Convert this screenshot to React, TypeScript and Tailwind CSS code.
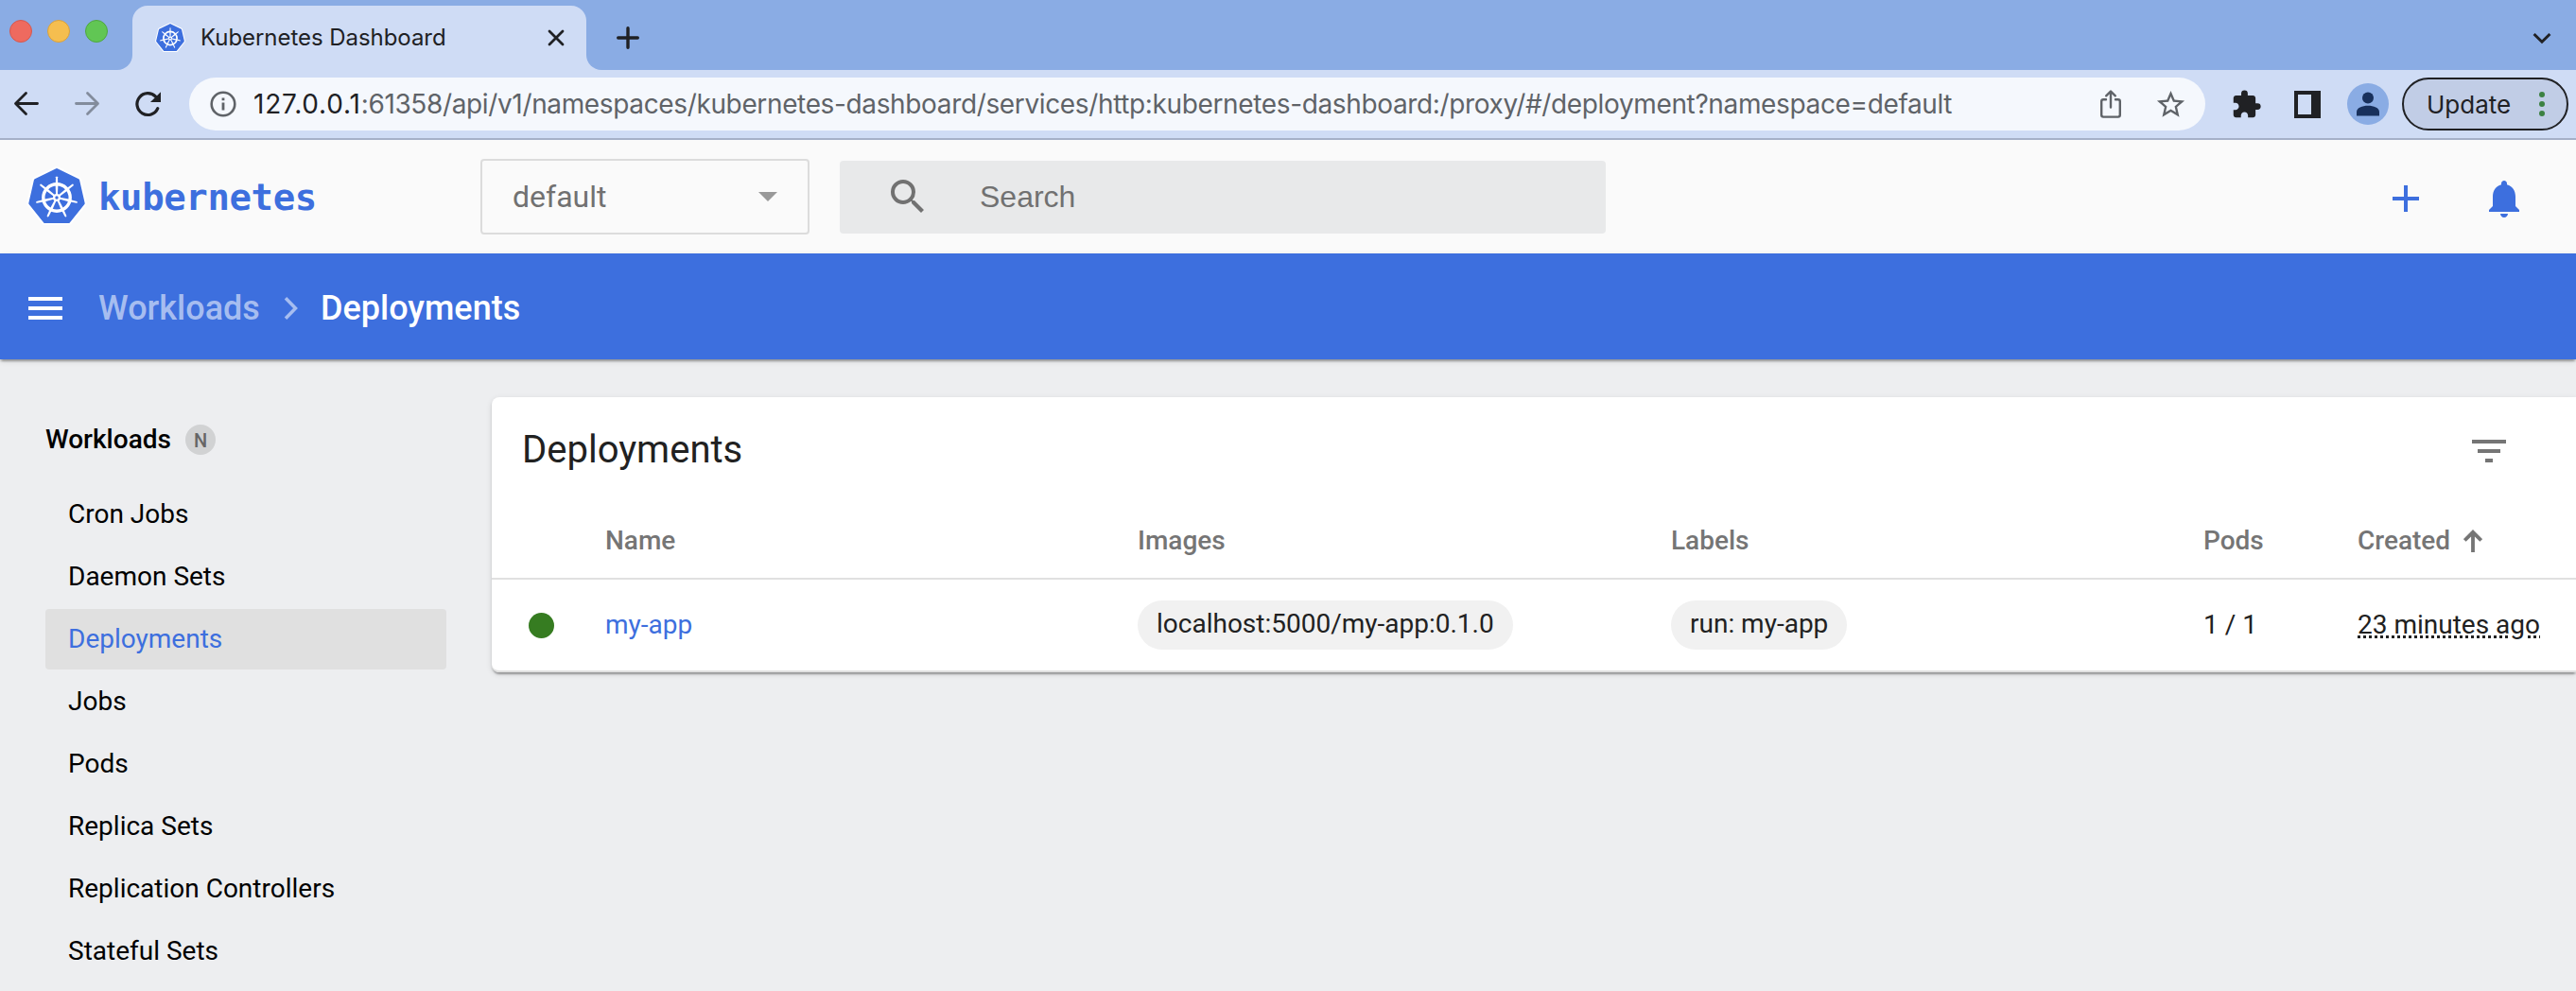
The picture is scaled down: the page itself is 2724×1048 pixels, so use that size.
import React from "react";

const cardShadow =
  "shadow-[0_4px_2px_-2px_rgba(0,0,0,0.2),0_2px_2px_0_rgba(0,0,0,0.14),0_2px_6px_0_rgba(0,0,0,0.12)]";

function Glyph({ d, className }: { d: string; className: string }) {
  return (
    <svg viewBox="0 0 24 24" fill="currentColor" className={"block shrink-0 " + className}>
      <path d={d} />
    </svg>
  );
}

const SPOKES = [0, 1, 2, 3, 4, 5, 6];

function KubeLogo({ className }: { className: string }) {
  const hept = "M32 3.6 L54.6 14.6 L60.2 39 L44.6 58.6 L19.4 58.6 L3.8 39 L9.4 14.6 Z";
  return (
    <svg viewBox="0 0 64 64" className={"block shrink-0 " + className}>
      <path d={hept} fill="#fff" stroke="#fff" strokeWidth="7" strokeLinejoin="round" />
      <path d={hept} fill="#3d6fde" stroke="#3d6fde" strokeWidth="3" strokeLinejoin="round" />
      <circle cx="32" cy="33" r="14.2" fill="none" stroke="#fff" strokeWidth="3.4" />
      {SPOKES.map((i) => (
        <g key={i} transform={`rotate(${(i * 360) / 7} 32 33)`}>
          <path d="M31 11.2 Q32 9.6 33 11.2 L33.2 18 L30.8 18 Z" fill="#fff" />
          <path d="M30.6 19 L33.4 19 L32.9 31 L31.1 31 Z" fill="#fff" />
        </g>
      ))}
      <circle cx="32" cy="33" r="4" fill="#fff" />
      <circle cx="32" cy="33" r="1.7" fill="#3d6fde" />
    </svg>
  );
}

function TabStrip() {
  return (
    <div className="flex h-[74px] bg-[#cfdcf5]">
      <div className="flex w-[140px] gap-4 rounded-br-[16px] bg-[#8aace4] pl-[10px] pt-[21px]">
        <span className="size-6 rounded-full border border-[#d5584f] bg-[#ee6a5f]" />
        <span className="size-6 rounded-full border border-[#d9a13b] bg-[#f5be4f]" />
        <span className="size-6 rounded-full border border-[#4fa73f] bg-[#61c654]" />
      </div>
      <div className="w-[480px] bg-[#8aace4] pt-[6px]">
        <div className="flex h-[68px] items-center rounded-t-[16px] bg-[#cfdcf5] pl-6 pr-[22px]">
          <KubeLogo className="size-8" />
          <span className="ml-4 whitespace-nowrap text-[24px] leading-[30px] tracking-[-0.05px] text-[#202124]">
            Kubernetes Dashboard
          </span>
          <svg viewBox="0 0 20 20" className="ml-auto size-5 shrink-0" stroke="#202124" strokeWidth="2.8" strokeLinecap="round">
            <path d="M3 3L17 17M17 3L3 17" />
          </svg>
        </div>
      </div>
      <div className="flex flex-1 items-center justify-between rounded-bl-[16px] bg-[#8aace4] pl-8 pr-[26px] pt-[6px]">
        <svg viewBox="0 0 24 24" className="size-6" stroke="#202124" strokeWidth="3.4" strokeLinecap="round">
          <path d="M12 1.7V22.3M1.7 12H22.3" />
        </svg>
        <svg viewBox="0 0 20 20" className="size-5" stroke="#202124" strokeWidth="3" fill="none">
          <path d="M1.6 6L10 14.2L18.4 6" />
        </svg>
      </div>
    </div>
  );
}

function Toolbar() {
  return (
    <div className="flex h-[74px] items-center border-b-2 border-[#a5b0c8] bg-[#cfdcf5] pl-3">
      <svg viewBox="0 0 32 32" className="size-8" fill="none" stroke="#202124" strokeWidth="2.8" strokeLinecap="round" strokeLinejoin="round">
        <path d="M27.5 15.5H5M15.5 4.5L4.5 15.5L15.5 26.5" />
      </svg>
      <svg viewBox="0 0 32 32" className="ml-8 size-8" fill="none" stroke="#838c9c" strokeWidth="2.8" strokeLinecap="round" strokeLinejoin="round">
        <path d="M4.5 15.5H27M16.5 4.5L27.5 15.5L16.5 26.5" />
      </svg>
      <svg viewBox="0 0 32 32" className="ml-8 size-8" fill="none">
        <path d="M26.8 20.6A11.4 11.4 0 1 1 24.6 8.2" stroke="#202124" strokeWidth="3.2" strokeLinecap="round" />
        <path d="M30 3.2V14H19Z" fill="#202124" />
      </svg>
      <div className="ml-7 flex h-14 w-[2132px] items-center rounded-full bg-[#f5f8fd] pl-[22px] pr-[19px] text-[#5f6368]">
        <svg viewBox="0 0 28 28" className="size-7 shrink-0" fill="none">
          <circle cx="14" cy="14" r="12.3" stroke="#5f6368" strokeWidth="2.6" />
          <path d="M14 12.5V20.5M14 7.5V10.3" stroke="#5f6368" strokeWidth="2.8" />
        </svg>
        <span className="ml-[18px] whitespace-nowrap text-[28px] leading-[34px] tracking-[-0.36px]">
          <span className="tracking-[0.8px] text-[#202124]">127.0.0.1</span>
          :61358/api/v1/namespaces/kubernetes-dashboard/services/http:kubernetes-dashboard:/proxy/#/deployment?namespace=default
        </span>
        <svg viewBox="0 0 24 32" className="ml-auto h-8 w-6 shrink-0" fill="none" stroke="#5f6368" strokeWidth="2.4" strokeLinecap="round" strokeLinejoin="round">
          <path d="M7 11.2H4.2Q2.2 11.2 2.2 13.2V27.6Q2.2 29.6 4.2 29.6H19.8Q21.8 29.6 21.8 27.6V13.2Q21.8 11.2 19.8 11.2H17" />
          <path d="M12 19.5V3M7.2 7.3L12 2.5L16.8 7.3" />
        </svg>
        <Glyph
          className="ml-[34px] size-[35px]"
          d="M22 9.24l-7.19-.62L12 2 9.19 8.63 2 9.24l5.46 4.73L5.82 21 12 17.27 18.18 21l-1.63-7.03L22 9.24zM12 15.4l-3.76 2.27 1-4.28-3.32-2.88 4.38-.38L12 6.1l1.71 4.04 4.38.38-3.32 2.88 1 4.28L12 15.4z"
        />
      </div>
      <Glyph
        className="ml-[27px] size-[33px] text-[#202124]"
        d="M20.5 11H19V7c0-1.1-.9-2-2-2h-4V3.5a2.5 2.5 0 0 0-5 0V5H4c-1.1 0-1.99.9-1.99 2v3.8H3.5c1.49 0 2.7 1.21 2.7 2.7s-1.21 2.7-2.7 2.7H2V20c0 1.1.9 2 2 2h3.8v-1.5c0-1.49 1.21-2.7 2.7-2.7 1.49 0 2.7 1.21 2.7 2.7V22H17c1.1 0 2-.9 2-2v-4h1.5a2.5 2.5 0 0 0 0-5z"
      />
      <div className="ml-[34px] h-[29px] w-7 shrink-0 border-4 border-r-[10px] border-[#202124]" />
      <div className="ml-7 flex size-11 shrink-0 items-center justify-center rounded-full bg-[#8aace4]">
        <svg viewBox="0 0 24 26" className="h-[26px] w-6" fill="#18305c">
          <circle cx="12" cy="6.5" r="6" />
          <path d="M0 25.5V21.5C0 17 6 14.8 12 14.8S24 17 24 21.5V25.5Z" />
        </svg>
      </div>
      <div className="ml-[14px] flex h-14 w-44 shrink-0 items-center rounded-full border-2 border-[#202124] bg-[#c1cde6] pl-6 pr-[23px]">
        <span className="pt-px text-[26px] leading-8 text-[#202124]">Update</span>
        <span className="ml-auto flex flex-col gap-1">
          <i className="size-[6px] rounded-full bg-[#3c8142]" />
          <i className="size-[6px] rounded-full bg-[#3c8142]" />
          <i className="size-[6px] rounded-full bg-[#3c8142]" />
        </span>
      </div>
    </div>
  );
}

function Header() {
  return (
    <header className="flex h-[120px] items-center bg-[#fafafa] pl-7 text-[#3d6fde]">
      <KubeLogo className="size-16" />
      <span className="ml-3 w-[404px] whitespace-nowrap font-['DejaVu_Sans_Mono',monospace] text-[39px] font-bold leading-none tracking-[-0.4px]">
        kubernetes
      </span>
      <div className="flex h-20 w-[348px] items-center justify-between rounded-[4px] border-2 border-[#dcdcdc] pl-8 pr-8 text-[32px] text-[#717171]">
        default
        <svg viewBox="0 0 20 10" className="h-[10px] w-5" fill="#999">
          <path d="M0 0H20L10 10Z" />
        </svg>
      </div>
      <div className="ml-8 flex h-[77px] w-[810px] items-center rounded-[4px] bg-[#e8e9ea] pl-12 text-[#717171]">
        <Glyph
          className="size-12"
          d="M15.5 14h-.79l-.28-.27A6.471 6.471 0 0 0 16 9.5 6.5 6.5 0 1 0 9.5 16c1.61 0 3.09-.59 4.23-1.57l.27.28v.79l5 4.99L20.49 19l-4.99-5zm-6 0C7.01 14 5 11.99 5 9.5S7.01 5 9.5 5 14 7.01 14 9.5 11.99 14 9.5 14z"
        />
        <span className="ml-[52px] font-['Liberation_Sans',sans-serif] text-[32px]">Search</span>
      </div>
      <Glyph className="ml-auto mt-1 size-12" d="M19 13h-6v6h-2v-6H5v-2h6V5h2v6h6v2z" />
      <Glyph
        className="ml-14 mr-[52px] mt-1 size-12"
        d="M12 22c1.1 0 2-.9 2-2h-4c0 1.1.89 2 2 2zm6-6v-5c0-3.07-1.64-5.64-4.5-6.32V4c0-.83-.67-1.5-1.5-1.5s-1.5.67-1.5 1.5v.68C7.63 5.36 6 7.92 6 11v5l-2 2v1h16v-1l-2-2z"
      />
    </header>
  );
}

function Breadcrumbs() {
  return (
    <div className={"relative flex h-28 items-center bg-[#3d6fde] pl-6 pt-1 text-[36px] font-medium text-white " + cardShadow}>
      <Glyph className="size-12" d="M3 18h18v-2H3v2zm0-5h18v-2H3v2zm0-7v2h18V6H3z" />
      <span className="ml-8 w-[171px] whitespace-nowrap text-[#a6bdf0]">Workloads</span>
      <svg viewBox="0 0 16 24" className="ml-[25px] h-6 w-4" fill="none" stroke="#a6bdf0" strokeWidth="3.5">
        <path d="M2 1.3L12.5 12L2 22.7" />
      </svg>
      <span className="ml-[23px]">Deployments</span>
    </div>
  );
}

const NAV = [
  "Cron Jobs",
  "Daemon Sets",
  "Deployments",
  "Jobs",
  "Pods",
  "Replica Sets",
  "Replication Controllers",
  "Stateful Sets",
];

function Sidebar() {
  return (
    <nav className="w-[520px] shrink-0 pl-12 pr-12 pt-[53px] text-[28px] text-black">
      <div className="flex h-16 items-center">
        <span className="w-[148px] font-medium">Workloads</span>
        <span className="flex size-8 items-center justify-center rounded-full bg-[#d1d2d3] pt-[2px] text-[20px] font-medium leading-none text-[#666]">
          N
        </span>
      </div>
      <ul className="mt-[15px] flex flex-col gap-[2px]">
        {NAV.map((n) => (
          <li
            key={n}
            className={
              n === "Deployments"
                ? "flex h-16 items-center rounded-[4px] bg-[#e0e0e0] pl-6 text-[#3d6fde]"
                : "flex h-16 items-center pl-6"
            }
          >
            {n}
          </li>
        ))}
      </ul>
    </nav>
  );
}

function Chip({ children }: { children: string }) {
  return (
    <span className="flex h-[52px] w-fit items-center whitespace-nowrap rounded-full bg-[#f1f1f1] px-5 pb-[2px]">{children}</span>
  );
}

const GRID = "grid grid-cols-[120px_563px_564px_563px_163px_1fr] items-center";

function Deployments() {
  return (
    <section className={"mt-10 h-[291px] flex-1 rounded-l-[8px] bg-white text-[28px] text-[#212121] " + cardShadow}>
      <div className="flex h-28 items-center justify-between pl-8 pr-[68px]">
        <h2 className="text-[40px]">Deployments</h2>
        <Glyph className="mt-[2px] size-12 text-[#757575]" d="M10 18h4v-2h-4v2zM3 6v2h18V6H3zm3 7h12v-2H6v2z" />
      </div>
      <div className={"h-[81px] border-b-2 border-[#e0e0e0] font-medium text-[#757575] " + GRID}>
        <span />
        <span>Name</span>
        <span>Images</span>
        <span>Labels</span>
        <span>Pods</span>
        <span className="flex items-center">
          Created
          <svg viewBox="0 0 20 24" className="ml-[14px] h-6 w-5" fill="none" stroke="#757575" strokeWidth="3.8">
            <path d="M10 24V3M1.3 11.5L10 2.8L18.7 11.5" />
          </svg>
        </span>
      </div>
      <div className={"h-[98px] rounded-bl-[8px] border-b-2 border-[#e0e0e0] " + GRID}>
        <span className="ml-[39px] size-[27px] rounded-full bg-[#367c21]" />
        <span className="text-[#3d6fde]">my-app</span>
        <Chip>localhost:5000/my-app:0.1.0</Chip>
        <Chip>run: my-app</Chip>
        <span>1 / 1</span>
        <span className="whitespace-nowrap underline decoration-dotted decoration-[3px] underline-offset-[2px]">23 minutes ago</span>
      </div>
    </section>
  );
}

export default function App() {
  return (
    <div className="flex h-[1048px] w-[2724px] flex-col overflow-hidden bg-[#edeef0] font-[Roboto,sans-serif]">
      <div className="font-[Inter,sans-serif]">
        <TabStrip />
        <Toolbar />
      </div>
      <Header />
      <Breadcrumbs />
      <main className="flex flex-1">
        <Sidebar />
        <Deployments />
      </main>
    </div>
  );
}
